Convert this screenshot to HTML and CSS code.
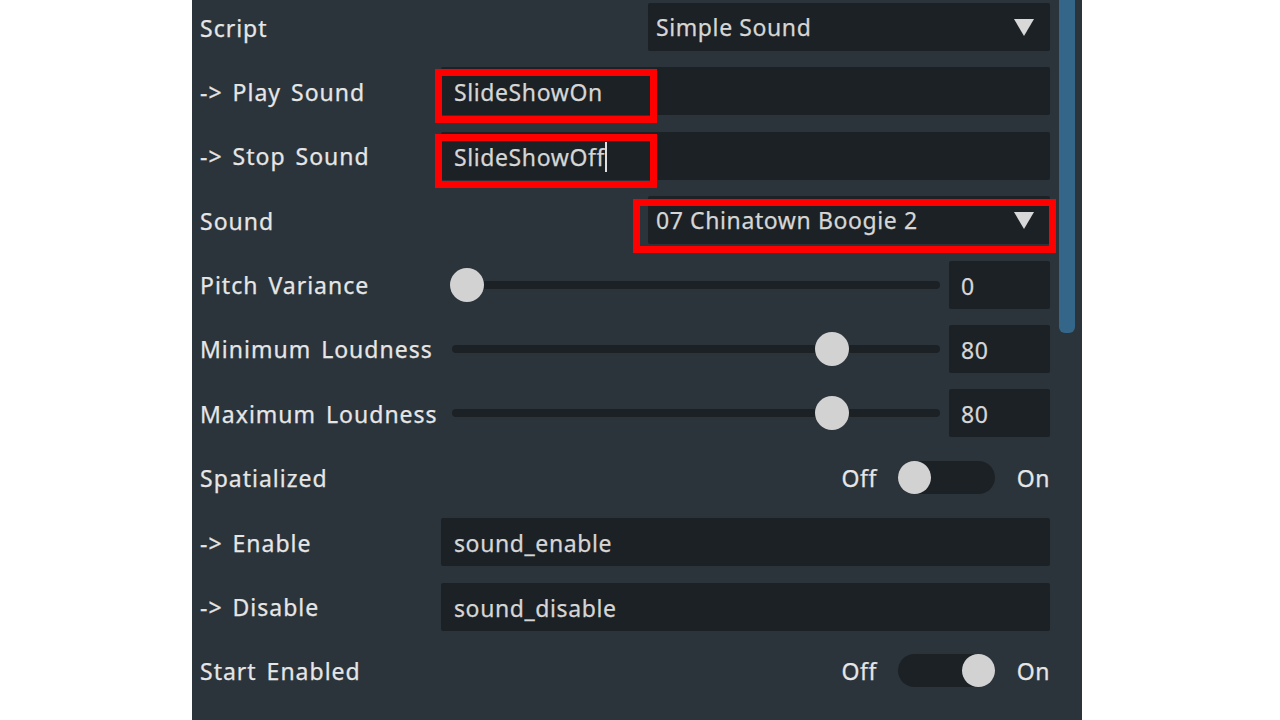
FILE: index.html
```html
<!DOCTYPE html>
<html>
<head>
<meta charset="utf-8">
<link rel="stylesheet" href="styles.css">
</head>
<body>
<div class="stage">
  <div class="panel">
    <div class="rows">
      <div class="row">
        <div class="label">Script</div>
        <div class="field right">
          <div class="select"><span>Simple Sound</span><span class="tri"></span></div>
        </div>
      </div>
      <div class="row">
        <div class="label">-&gt; Play Sound</div>
        <div class="field"><div class="input">SlideShowOn</div></div>
      </div>
      <div class="row">
        <div class="label">-&gt; Stop Sound</div>
        <div class="field"><div class="input">SlideShowOff<span class="caret"></span></div></div>
      </div>
      <div class="row">
        <div class="label">Sound</div>
        <div class="field right">
          <div class="select"><span>07 Chinatown Boogie 2</span><span class="tri"></span></div>
        </div>
      </div>
      <div class="row">
        <div class="label">Pitch Variance</div>
        <div class="field slider-field">
          <div class="track"><div class="knob" style="--v:0"></div></div>
          <div class="num">0</div>
        </div>
      </div>
      <div class="row">
        <div class="label">Minimum Loudness</div>
        <div class="field slider-field">
          <div class="track"><div class="knob" style="--v:0.8"></div></div>
          <div class="num">80</div>
        </div>
      </div>
      <div class="row">
        <div class="label">Maximum Loudness</div>
        <div class="field slider-field">
          <div class="track"><div class="knob" style="--v:0.8"></div></div>
          <div class="num">80</div>
        </div>
      </div>
      <div class="row">
        <div class="label">Spatialized</div>
        <div class="field right toggle-field">
          <span class="tlabel">Off</span>
          <div class="switch"><div class="sknob"></div></div>
          <span class="tlabel">On</span>
        </div>
      </div>
      <div class="row">
        <div class="label">-&gt; Enable</div>
        <div class="field"><div class="input">sound_enable</div></div>
      </div>
      <div class="row">
        <div class="label">-&gt; Disable</div>
        <div class="field"><div class="input">sound_disable</div></div>
      </div>
      <div class="row">
        <div class="label">Start Enabled</div>
        <div class="field right toggle-field">
          <span class="tlabel">Off</span>
          <div class="switch on"><div class="sknob"></div></div>
          <span class="tlabel">On</span>
        </div>
      </div>
    </div>
    <div class="scroll"><div class="thumb"></div></div>
    <div class="mark m1"></div>
    <div class="mark m2"></div>
    <div class="mark m3"></div>
  </div>
</div>
</body>
</html>
```
FILE: styles.css
```css
html, body {
  margin: 0;
  padding: 0;
  background: #ffffff;
  width: 1280px;
  height: 720px;
  overflow: hidden;
}
.stage {
  display: flex;
  justify-content: flex-start;
  padding-left: 192px;
  height: 720px;
}
.panel {
  position: relative;
  width: 890px;
  height: 720px;
  background: #2b343b;
  display: flex;
  font-family: "Noto Sans", sans-serif;
  color: #e6e6e6;
  -webkit-text-stroke: 0.25px currentColor;
}
.rows {
  width: 850px;
  padding: 3px 0 0 8px;
  display: flex;
  flex-direction: column;
  gap: 16.4px;
}
.row {
  display: flex;
  align-items: center;
  height: 48px;
}
.label {
  width: 241px;
  flex: none;
  font-size: 23px;
  letter-spacing: 1px;
  word-spacing: 3px;
  white-space: nowrap;
  padding-top: 1px;
}
.field {
  width: 609px;
  height: 48px;
  display: flex;
  align-items: center;
}
.field.right {
  justify-content: flex-end;
}
.input, .select, .num {
  height: 48px;
  background: #1c2125;
  border-radius: 2px;
  box-sizing: border-box;
  display: flex;
  align-items: center;
  font-size: 23px;
  letter-spacing: 0.6px;
  color: #d6d6d6;
  white-space: nowrap;
  padding-top: 2px;
}
.input {
  width: 609px;
  padding-left: 13px;
}
.caret {
  display: inline-block;
  width: 2px;
  height: 30px;
  background: #e0e0e0;
  margin-left: 0;
}
.select {
  width: 402px;
  padding: 0 16px 0 8px;
  justify-content: space-between;
}
.tri {
  width: 0;
  height: 0;
  border-left: 10.5px solid transparent;
  border-right: 10.5px solid transparent;
  border-top: 17px solid #d8d8d8;
}
.slider-field {
  padding-left: 11px;
  box-sizing: border-box;
  gap: 9px;
}
.track {
  position: relative;
  width: 488px;
  height: 8px;
  border-radius: 4px;
  background: #1c2125;
}
.knob {
  position: absolute;
  top: -13px;
  left: calc((100% - 32px) * var(--v) - 2px);
  width: 34px;
  height: 34px;
  border-radius: 50%;
  background: #d2d2d2;
}
.num {
  width: 101px;
  padding-left: 12px;
}
.toggle-field {
  gap: 0;
}
.tlabel {
  font-size: 23px;
  letter-spacing: 0.5px;
  color: #e6e6e6;
}
.toggle-field .tlabel:first-child {
  margin-right: 21px;
}
.toggle-field .tlabel:last-child {
  margin-left: 22px;
  margin-right: 0;
}
.switch {
  width: 97px;
  height: 33px;
  border-radius: 17px;
  background: #1c2125;
  display: flex;
  align-items: center;
}
.switch.on {
  justify-content: flex-end;
}
.sknob {
  width: 33px;
  height: 33px;
  border-radius: 50%;
  background: #d2d2d2;
}
.scroll {
  margin-left: 9px;
  width: 16px;
  height: 333px;
}
.thumb {
  width: 16px;
  height: 333px;
  background: #336688;
  border-radius: 0 0 6px 6px;
}
.mark {
  position: absolute;
  border: 7px solid #ff0000;
  box-sizing: border-box;
}
.m1 { left: 243px; top: 69px; width: 222px; height: 54px; }
.m2 { left: 243px; top: 134px; width: 222px; height: 54px; }
.m3 { left: 441px; top: 199px; width: 423px; height: 54px; }
```
